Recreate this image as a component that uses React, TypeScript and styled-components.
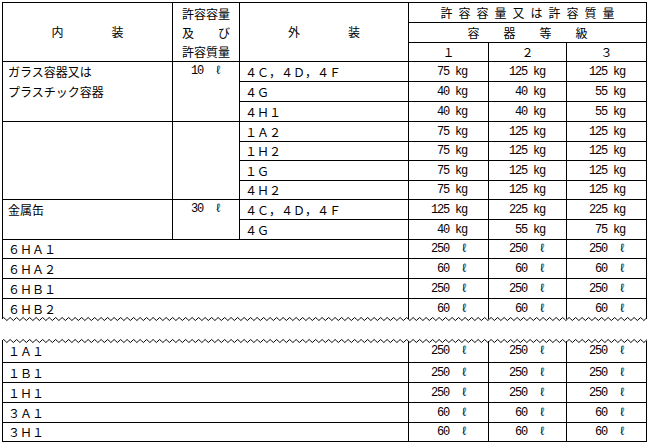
import styled, { createGlobalStyle } from 'styled-components';

type Row = [string, string, string, string];

interface Group {
    name: string[];
    amount: string;
    rows: Row[];
}

const groups: Group[] = [
    {
        name: ['ガラス容器又は', 'プラスチック容器'],
        amount: '10  ℓ',
        rows: [
            ['４Ｃ，４Ｄ，４Ｆ', '75 kg', '125 kg', '125 kg'],
            ['４Ｇ', '40 kg', '40 kg', '55 kg'],
            ['４Ｈ１', '40 kg', '40 kg', '55 kg'],
        ],
    },
    {
        name: [],
        amount: '',
        rows: [
            ['１Ａ２', '75 kg', '125 kg', '125 kg'],
            ['１Ｈ２', '75 kg', '125 kg', '125 kg'],
            ['１Ｇ', '75 kg', '125 kg', '125 kg'],
            ['４Ｈ２', '75 kg', '125 kg', '125 kg'],
        ],
    },
    {
        name: ['金属缶'],
        amount: '30  ℓ',
        rows: [
            ['４Ｃ，４Ｄ，４Ｆ', '125 kg', '225 kg', '225 kg'],
            ['４Ｇ', '40 kg', '55 kg', '75 kg'],
        ],
    },
];

// 内装欄を使わない行（外装のみ）
const wideRows: Row[] = [
    ['６ＨＡ１', '250  ℓ', '250  ℓ', '250  ℓ'],
    ['６ＨＡ２', '60  ℓ', '60  ℓ', '60  ℓ'],
    ['６ＨＢ１', '250  ℓ', '250  ℓ', '250  ℓ'],
    ['６ＨＢ２', '60  ℓ', '60  ℓ', '60  ℓ'],
];

const lowerRows: Row[] = [
    ['１Ａ１', '250  ℓ', '250  ℓ', '250  ℓ'],
    ['１Ｂ１', '250  ℓ', '250  ℓ', '250  ℓ'],
    ['１Ｈ１', '250  ℓ', '250  ℓ', '250  ℓ'],
    ['３Ａ１', '60  ℓ', '60  ℓ', '60  ℓ'],
    ['３Ｈ１', '60  ℓ', '60  ℓ', '60  ℓ'],
];

// 元の表の罫線間隔（px）
const upperHeights = [20, 20, 20, 20, 19, 20, 19, 20, 20, 19, 20, 20, 20];
const lowerHeights = [22, 20, 20, 20, 19];

const TABLE_WIDTH = 645;

// 省略部分を示す波線
const wavePath = (() => {
    const period = 6.5;
    let d = 'M0 3';
    for (let x = 0; x < TABLE_WIDTH; x += period) {
        d += ` q${period / 4} -3 ${period / 2} 0 q${period / 4} 3 ${period / 2} 0`;
    }
    return d;
})();

const Wave = ({ className }: { className?: string }) => (
    <svg className={className} width={TABLE_WIDTH} height="6" viewBox={`0 0 ${TABLE_WIDTH} 6`}>
        <path d={wavePath} fill="none" stroke="#000" strokeWidth="1" />
    </svg>
);

const Cols = () => (
    <colgroup>
        <col style={{ width: 170 }} />
        <col style={{ width: 67 }} />
        <col style={{ width: 169 }} />
        <col style={{ width: 80 }} />
        <col style={{ width: 78 }} />
        <col />
    </colgroup>
);

const Values = ({ row }: { row: Row }) => (
    <>
        <ValueCell>{row[1]}</ValueCell>
        <ValueCell>{row[2]}</ValueCell>
        <ValueCell>{row[3]}</ValueCell>
    </>
);

const App = () => {
    let rowIndex = 0;

    return (
        <Sheet>
            <GlobalStyle />
            <Table $open="bottom">
                <Cols />
                <thead>
                    <HeadRow $h={20}>
                        <HeadCell rowSpan={3}>内　　　　装</HeadCell>
                        <StackCell rowSpan={3}>
                            許容容量{'\n'}及　　び{'\n'}許容質量
                        </StackCell>
                        <HeadCell rowSpan={3}>外　　　　装</HeadCell>
                        <TitleCell colSpan={3}>許容容量又は許容質量</TitleCell>
                    </HeadRow>
                    <HeadRow $h={20}>
                        <HeadCell colSpan={3}>容　　器　　等　　級</HeadCell>
                    </HeadRow>
                    <HeadRow $h={19}>
                        <HeadCell>１</HeadCell>
                        <HeadCell>２</HeadCell>
                        <HeadCell>３</HeadCell>
                    </HeadRow>
                </thead>
                <tbody>
                    {groups.map((group, gi) =>
                        group.rows.map((row, ri) => (
                            <BodyRow key={`${gi}-${ri}`} $h={upperHeights[rowIndex++]}>
                                {ri === 0 && (
                                    <>
                                        <NameCell rowSpan={group.rows.length}>
                                            {group.name.join('\n')}
                                        </NameCell>
                                        <AmountCell rowSpan={group.rows.length}>
                                            {group.amount}
                                        </AmountCell>
                                    </>
                                )}
                                <CodeCell>{row[0]}</CodeCell>
                                <Values row={row} />
                            </BodyRow>
                        ))
                    )}
                    {wideRows.map((row) => (
                        <BodyRow key={row[0]} $h={upperHeights[rowIndex++]}>
                            <CodeCell colSpan={3}>{row[0]}</CodeCell>
                            <Values row={row} />
                        </BodyRow>
                    ))}
                </tbody>
            </Table>
            <UpperWave />
            <LowerWave />
            <Table $open="top">
                <Cols />
                <tbody>
                    {lowerRows.map((row, i) => (
                        <BodyRow key={row[0]} $h={lowerHeights[i]}>
                            <CodeCell colSpan={3}>{row[0]}</CodeCell>
                            <Values row={row} />
                        </BodyRow>
                    ))}
                </tbody>
            </Table>
        </Sheet>
    );
};

export default App;

const GlobalStyle = createGlobalStyle`
    html, body {
        margin: 0;
        padding: 0;
        background: #fff;
    }
    body {
        color: #000;
        font-family: "Noto Sans CJK JP", "Noto Sans", sans-serif;
    }
`;

const Sheet = styled.div`
    width: 649px;
    padding: 2px 0 0 2px;
    box-sizing: border-box;
`;

const Table = styled.table<{ $open: 'top' | 'bottom' }>`
    width: ${TABLE_WIDTH}px;
    table-layout: fixed;
    border-collapse: collapse;
    font-size: 12px;
    line-height: 1;

    th, td {
        border: 1px solid #000;
        padding: 0;
        font-weight: normal;
        white-space: pre;
        overflow: hidden;
    }

    ${({ $open }) =>
        $open === 'bottom'
            ? `tbody tr:last-child td { border-bottom: none; }`
            : `tbody tr:first-child td { border-top: none; }`}
`;

const HeadRow = styled.tr<{ $h: number }>`
    height: ${({ $h }) => $h}px;
`;

const HeadCell = styled.th`
    text-align: center;
    vertical-align: middle;
`;

const StackCell = styled.th`
    text-align: center;
    vertical-align: middle;
    line-height: 19px;
`;

const TitleCell = styled.th`
    text-align: center;
    vertical-align: middle;
    letter-spacing: 6px;
    padding-left: 6px !important;
`;

const BodyRow = styled.tr<{ $h: number }>`
    height: ${({ $h }) => $h}px;
`;

const NameCell = styled.td`
    text-align: left;
    vertical-align: top;
    padding-left: 5px !important;
    line-height: 19.7px;
`;

const AmountCell = styled.td`
    text-align: center;
    vertical-align: top;
    line-height: 19.7px;
    font-family: "Liberation Mono", "Noto Sans CJK JP", monospace;
    letter-spacing: -1.2px;
`;

const CodeCell = styled.td`
    text-align: left;
    vertical-align: middle;
    padding-left: 5px !important;
`;

const ValueCell = styled.td`
    text-align: right;
    vertical-align: middle;
    padding-right: 21px !important;
    font-family: "Liberation Mono", "Noto Sans CJK JP", monospace;
    letter-spacing: -1.2px;
`;

const UpperWave = styled(Wave)`
    display: block;
    margin-top: -3px;
`;

const LowerWave = styled(Wave)`
    display: block;
    margin: 16px 0 -3px;
`;
